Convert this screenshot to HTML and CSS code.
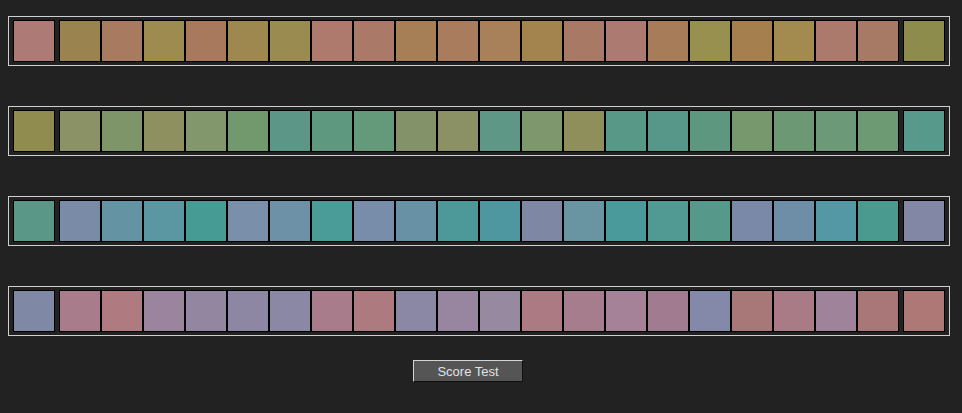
FILE: index.html
```html
<!DOCTYPE html>
<html>
<head>
<meta charset="utf-8">
<title>Hue Test</title>
<link rel="stylesheet" href="styles.css">
</head>
<body>
<div class="test">
  <div class="row">
    <div class="chip fixed" style="background:#ae7a76"></div>
    <div class="track">
      <div class="chip" style="background:#9a834f"></div>
      <div class="chip" style="background:#a87a5f"></div>
      <div class="chip" style="background:#9d8b50"></div>
      <div class="chip" style="background:#a8795d"></div>
      <div class="chip" style="background:#9f8850"></div>
      <div class="chip" style="background:#9a8c50"></div>
      <div class="chip" style="background:#ae7a6d"></div>
      <div class="chip" style="background:#aa7968"></div>
      <div class="chip" style="background:#a77f57"></div>
      <div class="chip" style="background:#a97c5d"></div>
      <div class="chip" style="background:#a8805a"></div>
      <div class="chip" style="background:#a3844f"></div>
      <div class="chip" style="background:#a87a66"></div>
      <div class="chip" style="background:#ad7a72"></div>
      <div class="chip" style="background:#a67d58"></div>
      <div class="chip" style="background:#98904f"></div>
      <div class="chip" style="background:#a67f4e"></div>
      <div class="chip" style="background:#a38a4f"></div>
      <div class="chip" style="background:#ac7a6c"></div>
      <div class="chip" style="background:#a77a66"></div>
    </div>
    <div class="chip fixed" style="background:#8e8c4c"></div>
  </div>

  <div class="row">
    <div class="chip fixed" style="background:#908c50"></div>
    <div class="track">
      <div class="chip" style="background:#8a9266"></div>
      <div class="chip" style="background:#7e9569"></div>
      <div class="chip" style="background:#8e915f"></div>
      <div class="chip" style="background:#82976b"></div>
      <div class="chip" style="background:#72996e"></div>
      <div class="chip" style="background:#5b9686"></div>
      <div class="chip" style="background:#5e987f"></div>
      <div class="chip" style="background:#64997a"></div>
      <div class="chip" style="background:#84926a"></div>
      <div class="chip" style="background:#8c9165"></div>
      <div class="chip" style="background:#5e9786"></div>
      <div class="chip" style="background:#7f976c"></div>
      <div class="chip" style="background:#8e8f5b"></div>
      <div class="chip" style="background:#579886"></div>
      <div class="chip" style="background:#579789"></div>
      <div class="chip" style="background:#5e977f"></div>
      <div class="chip" style="background:#77976c"></div>
      <div class="chip" style="background:#6c9874"></div>
      <div class="chip" style="background:#6c9978"></div>
      <div class="chip" style="background:#6d9973"></div>
    </div>
    <div class="chip fixed" style="background:#579a8b"></div>
  </div>

  <div class="row">
    <div class="chip fixed" style="background:#5a9787"></div>
    <div class="track">
      <div class="chip" style="background:#7a8ba8"></div>
      <div class="chip" style="background:#6494a4"></div>
      <div class="chip" style="background:#5b97a3"></div>
      <div class="chip" style="background:#469b95"></div>
      <div class="chip" style="background:#7a8fa9"></div>
      <div class="chip" style="background:#6d91a7"></div>
      <div class="chip" style="background:#4a9c98"></div>
      <div class="chip" style="background:#778da9"></div>
      <div class="chip" style="background:#6991a5"></div>
      <div class="chip" style="background:#4d999a"></div>
      <div class="chip" style="background:#4f97a0"></div>
      <div class="chip" style="background:#7e88a5"></div>
      <div class="chip" style="background:#6994a2"></div>
      <div class="chip" style="background:#4b9a9b"></div>
      <div class="chip" style="background:#509a93"></div>
      <div class="chip" style="background:#56998a"></div>
      <div class="chip" style="background:#7b89a8"></div>
      <div class="chip" style="background:#6e8ea8"></div>
      <div class="chip" style="background:#5398a4"></div>
      <div class="chip" style="background:#4a9a90"></div>
    </div>
    <div class="chip fixed" style="background:#8387a6"></div>
  </div>

  <div class="row">
    <div class="chip fixed" style="background:#7f88a4"></div>
    <div class="track">
      <div class="chip" style="background:#a87c8b"></div>
      <div class="chip" style="background:#af7a80"></div>
      <div class="chip" style="background:#9a849e"></div>
      <div class="chip" style="background:#9386a0"></div>
      <div class="chip" style="background:#8d87a3"></div>
      <div class="chip" style="background:#8a88a4"></div>
      <div class="chip" style="background:#a97c8c"></div>
      <div class="chip" style="background:#ad7a7f"></div>
      <div class="chip" style="background:#8b88a6"></div>
      <div class="chip" style="background:#98859f"></div>
      <div class="chip" style="background:#978aa0"></div>
      <div class="chip" style="background:#ab7a82"></div>
      <div class="chip" style="background:#a57d8d"></div>
      <div class="chip" style="background:#a58297"></div>
      <div class="chip" style="background:#a17c91"></div>
      <div class="chip" style="background:#8489a9"></div>
      <div class="chip" style="background:#a87777"></div>
      <div class="chip" style="background:#a97b86"></div>
      <div class="chip" style="background:#9e839a"></div>
      <div class="chip" style="background:#aa7779"></div>
    </div>
    <div class="chip fixed" style="background:#ae7876"></div>
  </div>

  <div class="actions">
    <button class="score" type="button">Score Test</button>
  </div>
</div>
</body>
</html>
```

FILE: styles.css
```css
html, body {
  background: #222222;
}

body {
  margin: 8px;
  font-family: "Liberation Sans", Arial, sans-serif;
}

.test {
  padding-top: 8px;
  display: flex;
  flex-direction: column;
  gap: 40px;
}

.row {
  width: 942px;
  height: 50px;
  box-sizing: border-box;
  border: 1px solid #cfcfcf;
  padding: 3px 4px;
  display: flex;
  gap: 4px;
}

.track {
  display: flex;
}

.chip {
  width: 42px;
  height: 42px;
  box-sizing: border-box;
  border: 1px solid #000000;
  flex: none;
}

.actions {
  margin-top: -16px;
  padding-left: 405px;
}

.score {
  width: 110px;
  height: 22px;
  margin: 0;
  padding: 0;
  box-sizing: border-box;
  background: #555555;
  color: #e2e2e2;
  font-family: "Liberation Sans", Arial, sans-serif;
  font-size: 13px;
  border-style: solid;
  border-width: 1px;
  border-color: #d4d4d4 #101010 #101010 #d4d4d4;
  cursor: pointer;
}
```
